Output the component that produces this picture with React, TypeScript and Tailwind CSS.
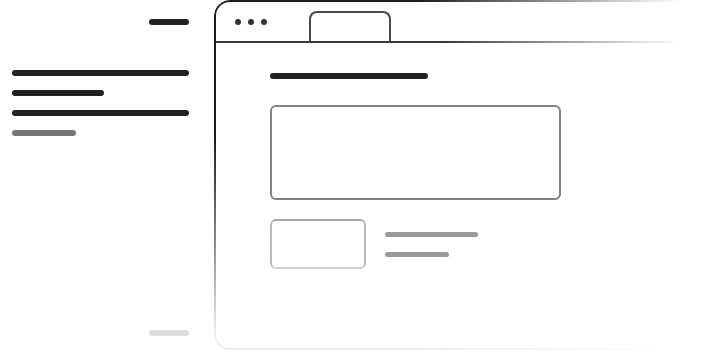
export default function App() {
  return (
    <div className="flex h-[351px] w-[720px] overflow-hidden bg-white">
      {/* left text column */}
      <div className="flex w-[189px] shrink-0 flex-col pl-3 pt-[19px]">
        <div className="h-[6px] w-10 self-end rounded-full bg-[#222]" />
        <div className="mt-[45px] flex flex-col gap-[14px]">
          <div className="h-[6px] w-full rounded-full bg-[#222]" />
          <div className="h-[6px] w-[92px] rounded-full bg-[#222]" />
          <div className="h-[6px] w-full rounded-full bg-[#222]" />
          <div className="h-[6px] w-16 rounded-full bg-[#777]" />
        </div>
        <div className="mt-auto mb-[15px] h-[6px] w-10 self-end rounded-full bg-[#dedede]" />
      </div>

      {/* browser frame */}
      <div className="relative ml-[25px] flex h-[350px] flex-1 flex-col pl-[2px] pt-[2px]">
        <div className="pointer-events-none absolute inset-0 rounded-l-2xl border-2 border-r-0 border-[#1c1c1c] [mask-image:linear-gradient(to_right,#000_40%,transparent_92%),linear-gradient(to_bottom,#000_40%,rgba(0,0,0,0.08)_95%)] [mask-composite:intersect]" />

        <div className="flex h-[41px] items-end border-b-2 border-[#3a3a3a] [mask-image:linear-gradient(to_right,#000_45%,transparent_92%)]">
          <div className="flex gap-[7px] self-center pl-[19px] pt-[1px]">
            <span className="size-[6px] rounded-full bg-[#333]" />
            <span className="size-[6px] rounded-full bg-[#333]" />
            <span className="size-[6px] rounded-full bg-[#333]" />
          </div>
          <div className="ml-[42px] h-[30px] w-[82px] rounded-t-lg border-2 border-b-0 border-[#4a4a4a] bg-white" />
        </div>

        <div className="flex flex-col pl-[54px] pt-[30px]">
          <div className="h-[6px] w-[158px] rounded-full bg-[#222]" />
          <div className="mt-[26px] h-[95px] w-[291px] rounded-md border-2 border-[#828282]" />
          <div className="mt-[19px] flex items-center gap-[19px]">
            <div className="h-[50px] w-[96px] rounded-md border-2 border-t-[#a8a8a8] border-x-[#bcbcbc] border-b-[#d0d0d0]" />
            <div className="flex flex-col gap-[15px] pt-[1px]">
              <div className="h-[5px] w-[93px] rounded-full bg-[#9a9a9a]" />
              <div className="h-[5px] w-16 rounded-full bg-[#9a9a9a]" />
            </div>
          </div>
        </div>
      </div>
    </div>
  );
}
